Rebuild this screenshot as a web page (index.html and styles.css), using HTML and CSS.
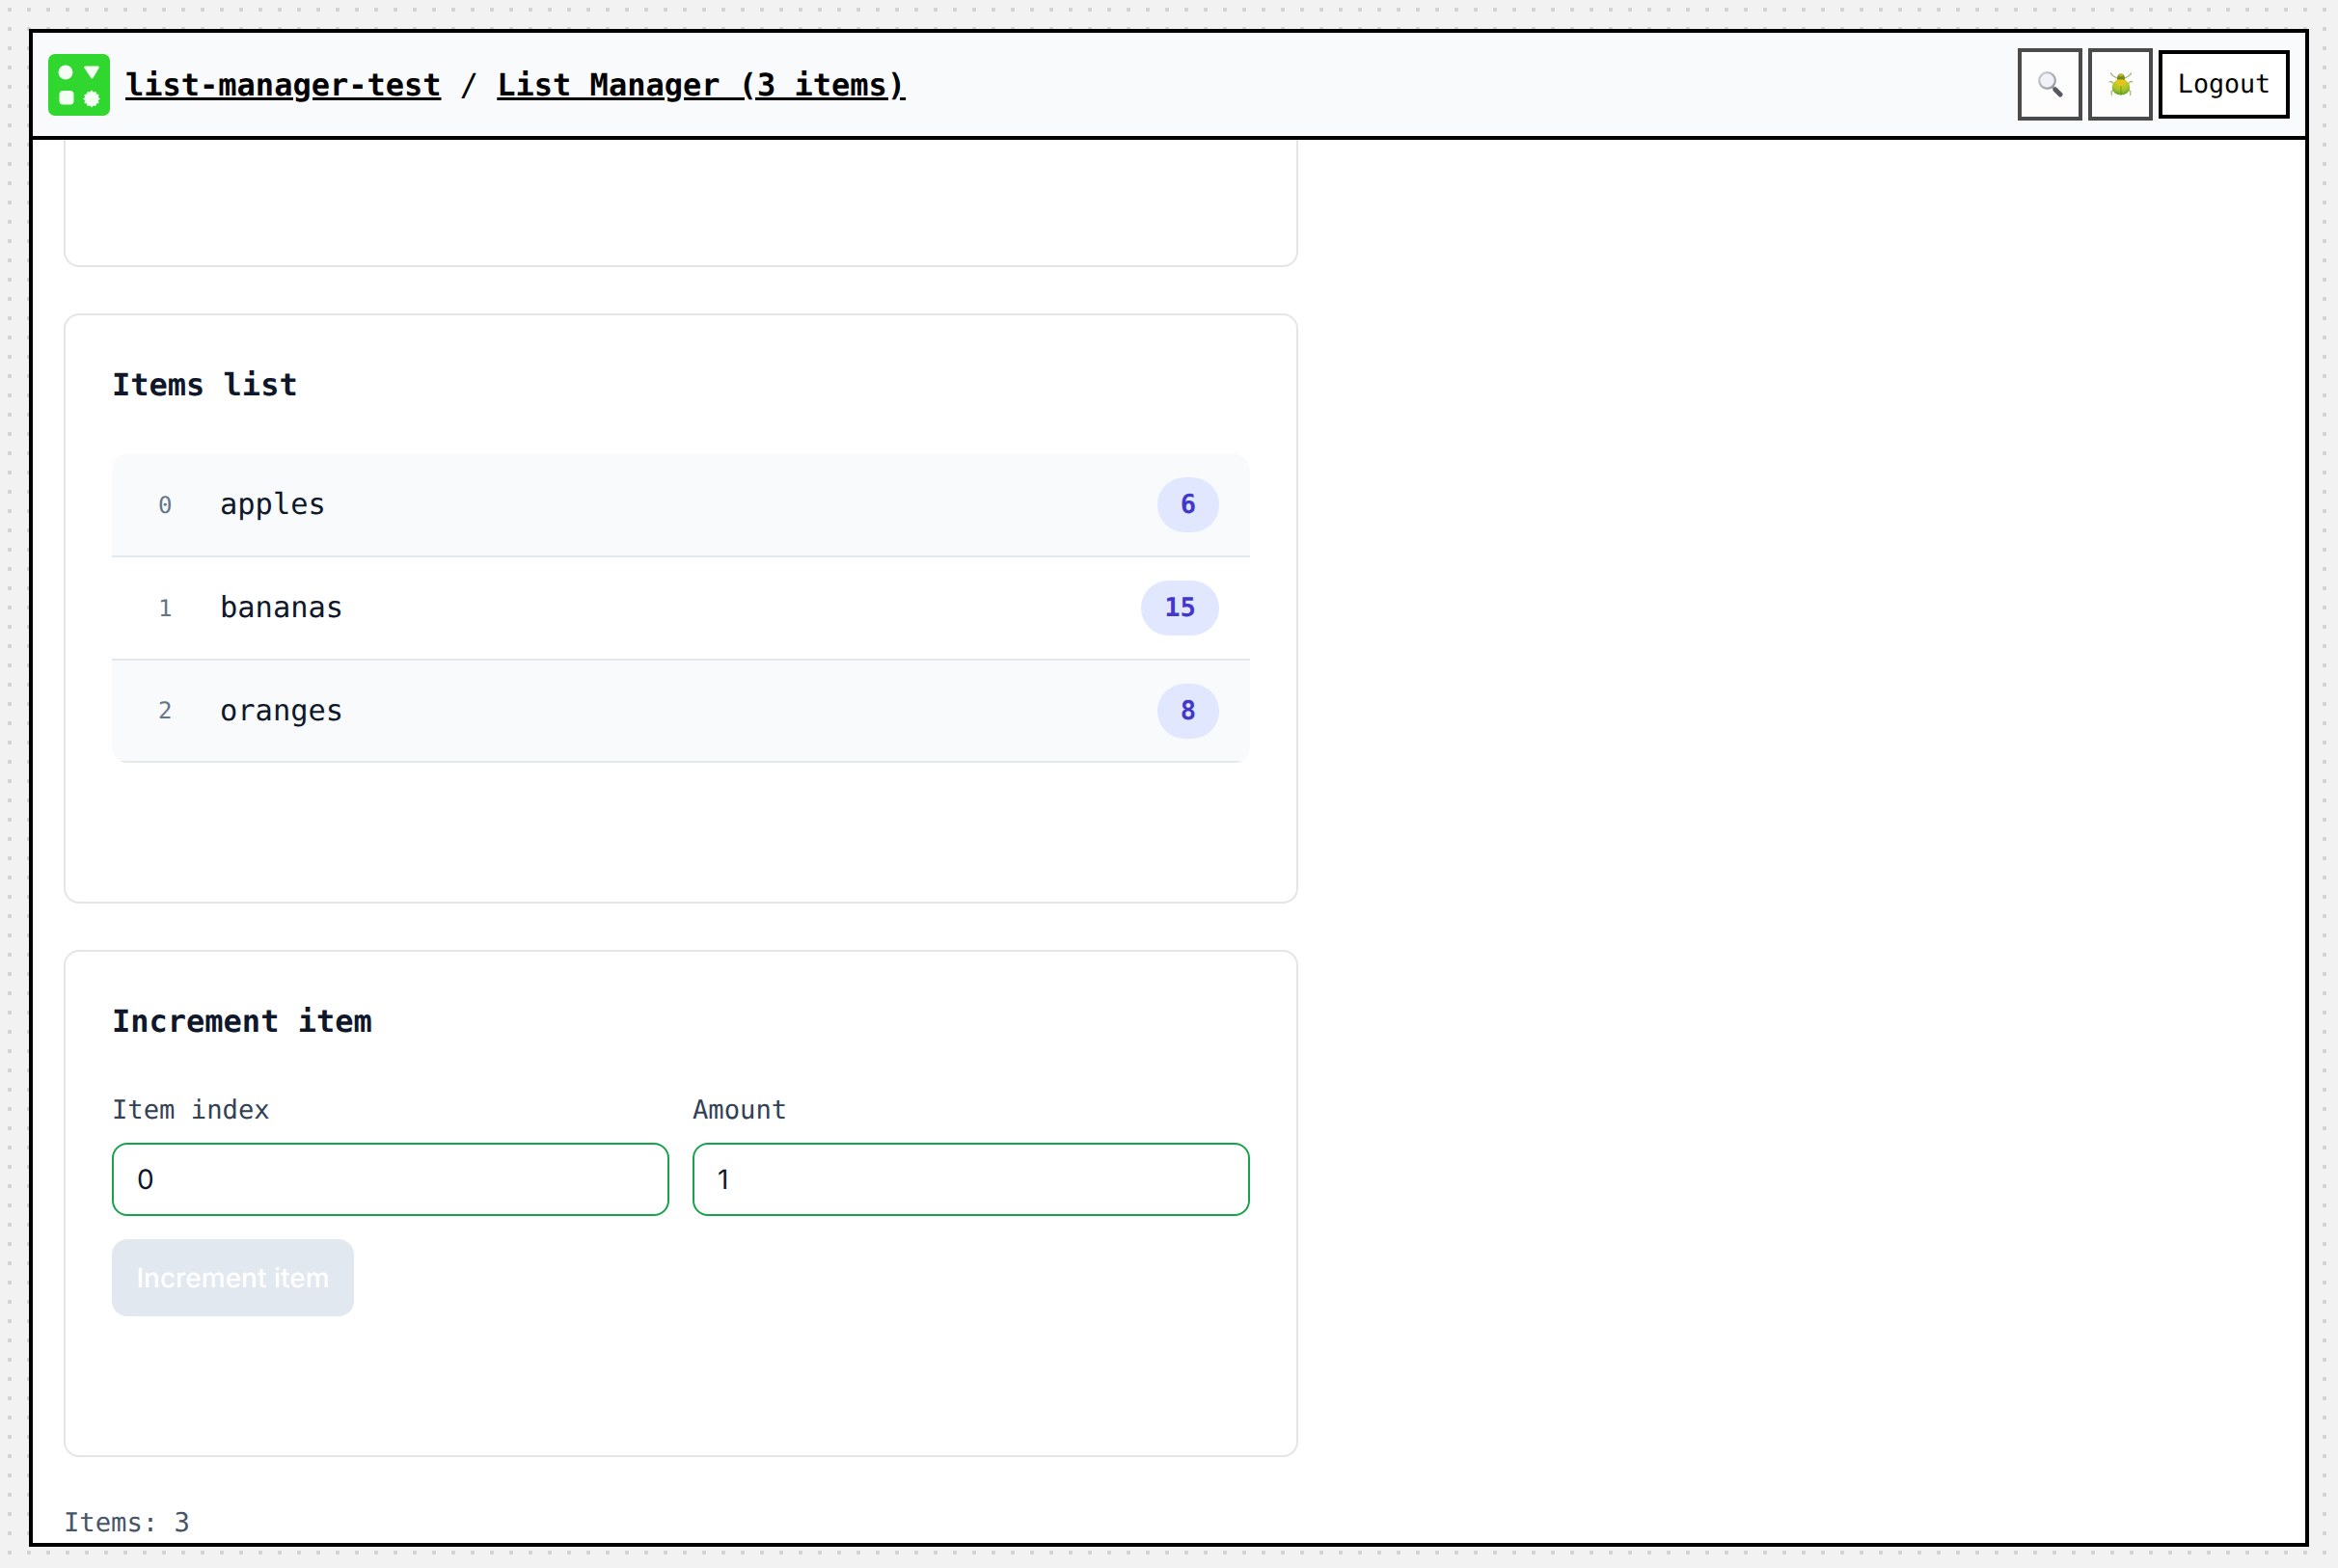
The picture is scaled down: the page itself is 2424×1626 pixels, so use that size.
FILE: index.html
```html
<!DOCTYPE html>
<html lang="en">
<head>
    <meta charset="UTF-8">
    <title>List Manager (3 items)</title>
    <link rel="stylesheet" href="styles.css">
</head>
<body>
    <div class="frame">
        <header class="topbar">
            <svg class="logo" viewBox="0 0 64 64">
                <rect width="64" height="64" rx="7" fill="#2fd72f"/>
                <circle cx="18" cy="19" r="7.500" fill="#f2fff2"/>
                <path d="M38.500 12.500h13a1.300 1.300 0 0 1 1.100 2l-6 10.300a1.300 1.300 0 0 1-2.300 0l-6.900-10.300a1.300 1.300 0 0 1 1.100-2z" fill="#f2fff2"/>
                <rect x="11.500" y="38" width="15" height="14.500" rx="4" fill="#f2fff2"/>
                <polygon points="45,37.500 46.800,39.600 49.400,38.900 50,41.500 52.600,42.100 51.900,44.700 53.800,46.500 51.900,48.300 52.600,50.900 50,51.500 49.400,54.100 46.800,53.400 45,55.500 43.200,53.400 40.600,54.100 40,51.500 37.400,50.900 38.100,48.300 36.200,46.500 38.100,44.700 37.400,42.100 40,41.500 40.600,38.900 43.200,39.600" fill="#f2fff2"/>
            </svg>
            <div class="crumbs">
                <a href="#">list-manager-test</a>
                <span class="sep">/</span>
                <a href="#">List Manager (3 items)</a>
            </div>
            <div class="actions">
                <button class="icon-btn" type="button">
                    <svg width="27" height="28" viewBox="0 0 27 28">
                        <defs>
                            <linearGradient id="rim" x1="0" y1="0" x2="1" y2="1">
                                <stop offset="0" stop-color="#cfd2d8"/>
                                <stop offset="1" stop-color="#8f939d"/>
                            </linearGradient>
                        </defs>
                        <line x1="15.500" y1="15.500" x2="18" y2="18" stroke="#9a9a9f" stroke-width="3"/>
                        <line x1="19" y1="19" x2="24" y2="24" stroke="#55585e" stroke-width="5" stroke-linecap="round"/>
                        <circle cx="10.500" cy="9.500" r="8.300" fill="#f1f2f5" stroke="url(#rim)" stroke-width="2.200"/>
                    </svg>
                </button>
                <button class="icon-btn" type="button">
                    <svg width="26" height="25" viewBox="0 0 26 25">
                        <defs>
                            <radialGradient id="shell" cx=".5" cy=".2" r=".85">
                                <stop offset="0" stop-color="#e9cc1e"/>
                                <stop offset=".55" stop-color="#a8c62c"/>
                                <stop offset="1" stop-color="#5c9c28"/>
                            </radialGradient>
                        </defs>
                        <g stroke="#a3b67a" stroke-width="1.200" fill="none">
                            <path d="M9 6L4.500 3.500L2 0.500"/>
                            <path d="M17 6L21.500 3.500L24 0.500"/>
                            <path d="M6 12L3 9.500L0.500 10"/>
                            <path d="M20 12L23 9.500L25.500 10"/>
                            <path d="M5.500 18L3 20L3.500 24"/>
                            <path d="M20.500 18L23 20L22.500 24"/>
                        </g>
                        <ellipse cx="13" cy="15.500" rx="9.300" ry="8" fill="url(#shell)"/>
                        <path d="M9 6a4 4.500 0 0 1 8 0v2.500h-8z" fill="#6f8d1f"/>
                        <path d="M8.500 7.500h9l1 2.500-5.500 5-5.500-5z" fill="#e6c41c"/>
                        <path d="M13 1.500c1.500 0 2.300 1.200 2.300 2.800h-4.600c0-1.600.8-2.800 2.300-2.800z" fill="#c9b21f"/>
                        <line x1="13" y1="14" x2="13" y2="23.500" stroke="#5b8a1e" stroke-width=".7"/>
                    </svg>
                </button>
                <button class="logout" type="button">Logout</button>
            </div>
        </header>

        <main class="content">
            <section class="card card-cut"></section>

            <section class="card">
                <h2>Items list</h2>
                <ul class="items">
                    <li class="item">
                        <span class="idx">0</span>
                        <span class="name">apples</span>
                        <span class="pill">6</span>
                    </li>
                    <li class="item">
                        <span class="idx">1</span>
                        <span class="name">bananas</span>
                        <span class="pill">15</span>
                    </li>
                    <li class="item">
                        <span class="idx">2</span>
                        <span class="name">oranges</span>
                        <span class="pill">8</span>
                    </li>
                </ul>
            </section>

            <section class="card">
                <h2>Increment item</h2>
                <form class="inc-form">
                    <div class="fields">
                        <label class="field">
                            <span class="field-label">Item index</span>
                            <input type="text" value="0">
                        </label>
                        <label class="field">
                            <span class="field-label">Amount</span>
                            <input type="text" value="1">
                        </label>
                    </div>
                    <button class="submit" type="button" disabled>Increment item</button>
                </form>
            </section>

            <p class="status">Items: 3</p>
        </main>
    </div>
</body>
</html>
```

FILE: styles.css
```css
* {
    box-sizing: border-box;
}
html, body {
    margin: 0;
    height: 100%;
    overflow: hidden;
}
body {
    padding: 30px;
    background-color: #f2f2f2;
    background-image: radial-gradient(circle at center, #d2d2d2 2px, transparent 2.5px);
    background-size: 20px 20px;
    font-family: "DejaVu Sans Mono", monospace;
    color: #0f172a;
    text-rendering: geometricPrecision;
}
.frame {
    display: flex;
    flex-direction: column;
    height: 1574px;
    border: 4px solid #000;
    background-color: #fff;
    overflow: hidden;
}

/* top bar */
.topbar {
    display: flex;
    align-items: center;
    flex: none;
    height: 111px;
    padding: 0 16px;
    border-bottom: 4px solid #000;
    background-color: #f8fafc;
}
.logo {
    flex: none;
    width: 64px;
    height: 64px;
    margin-right: 16px;
}
.crumbs {
    display: flex;
    flex: 1;
    font-size: 32px;
    line-height: 48px;
    white-space: pre;
    color: #000;
}
.crumbs a {
    color: #000;
    font-weight: bold;
    text-decoration: underline;
}
.sep {
    padding: 0 19.26px;
}
.actions {
    display: flex;
    align-items: center;
    gap: 6px;
}
.icon-btn {
    display: flex;
    align-items: center;
    justify-content: center;
    width: 67px;
    height: 75px;
    padding: 0;
    border: 4px solid #4a4a4a;
    background-color: #fdfdfd;
}
.logout {
    width: 136px;
    height: 71px;
    padding: 0;
    border: 4px solid #000;
    background-color: #fff;
    color: #000;
    font-family: "DejaVu Sans Mono", monospace;
    font-size: 26.67px;
    text-rendering: geometricPrecision;
}

/* cards */
.content {
    display: flex;
    flex-direction: column;
    align-items: flex-start;
    flex: 1;
    gap: 48px;
    padding: 0 32px;
    overflow: hidden;
}
.card {
    flex: none;
    width: 1280px;
    padding: 48px;
    border: 2px solid #e5e5e5;
    border-radius: 16px;
}
.card-cut {
    height: 132px;
    padding: 0;
    border-top: 0;
    border-radius: 0 0 16px 16px;
}
h2 {
    margin: 0 0 48px;
    font-size: 32px;
    line-height: 48px;
    font-weight: bold;
}

/* items list */
.items {
    margin: 0 0 96px;
    padding: 0;
    list-style: none;
    border-radius: 16px;
    overflow: hidden;
}
.item {
    display: flex;
    align-items: center;
    height: 107px;
    padding: 0 32px 0 48px;
    border-bottom: 2px solid #e2e8f0;
    font-size: 30.4px;
}
.item:last-child {
    height: 106px;
}
.item:nth-child(odd) {
    background-color: #f8fafc;
}
.idx {
    width: 64px;
    font-size: 24px;
    color: #64748b;
}
.name {
    flex: 1;
}
.pill {
    min-width: 64px;
    padding: 0 24px;
    border-radius: 29px;
    background-color: #e0e7ff;
    color: #4338ca;
    font-size: 27.2px;
    font-weight: bold;
    line-height: 57px;
    text-align: center;
}

/* form */
.inc-form {
    display: flex;
    flex-direction: column;
    align-items: flex-start;
    gap: 24px;
    margin-bottom: 96px;
}
.fields {
    display: flex;
    gap: 24px;
    width: 100%;
}
.field {
    display: flex;
    flex-direction: column;
    flex: 1;
    gap: 12px;
}
.field-label {
    font-size: 27.2px;
    line-height: 42px;
    color: #334155;
}
.field input {
    width: 100%;
    height: 76px;
    padding: 0 24px;
    border: 2px solid #16a34a;
    border-radius: 16px;
    background-color: #fff;
    color: #0f172a;
    font-family: Inter, sans-serif;
    font-size: 28px;
    text-rendering: geometricPrecision;
}
.submit {
    width: 251px;
    height: 80px;
    padding: 0;
    border: none;
    border-radius: 16px;
    background-color: #e2e8f0;
    color: #fff;
    font-family: Inter, sans-serif;
    font-size: 28px;
    font-weight: 500;
    text-rendering: geometricPrecision;
}

.status {
    margin: 0;
    font-size: 27.2px;
    line-height: 42px;
    color: #475569;
}
```
